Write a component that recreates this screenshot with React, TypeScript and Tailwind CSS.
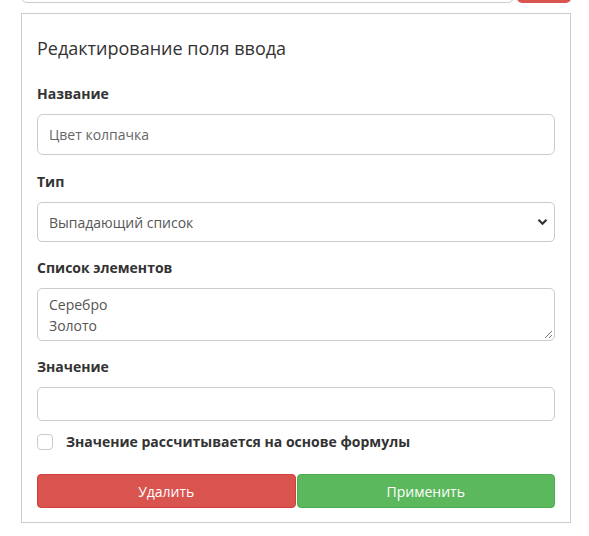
import React from "react";

export default function App() {
  const font = { fontFamily: '"Open Sans", "Noto Sans", sans-serif' };
  return (
    <div className="w-[589px] h-[536px] bg-white overflow-hidden text-[#333]" style={font}>
      {/* partial row above */}
      <div className="flex mt-[-31px] h-[34px] pl-[21px] gap-[3px]">
        <div className="w-[493px] h-[34px] border border-[#ccc] rounded-[6px] bg-white" />
        <div className="w-[54px] h-[34px] rounded-[5px] bg-[#d9534f]" />
      </div>
      <div className="ml-[21px] mt-[10px] w-[550px] border border-[#ccc] px-[15px] pt-[21px] pb-[14px]">
        <div className="text-[18px] leading-[26px] text-[#333]">Редактирование поля ввода</div>

        <div className="mt-[23px] text-[14px] font-bold leading-[20px]">Название</div>
        <div className="mt-[10px] h-[41px] border border-[#ccc] rounded-[6px] flex items-center px-[11px] text-[14px] text-[#666]">
          Цвет колпачка
        </div>

        <div className="mt-[17px] text-[14px] font-bold leading-[20px]">Тип</div>
        <div className="mt-[10px] h-[40px] border border-[#ccc] rounded-[5px] flex items-center justify-between pl-[11px] pr-[6px] text-[14px] text-[#555]">
          <span>Выпадающий список</span>
          <svg width="11" height="8" viewBox="0 0 11 8">
            <path d="M1.5 1.8 L5.5 5.8 L9.5 1.8" fill="none" stroke="#333" strokeWidth="2.2" />
          </svg>
        </div>

        <div className="mt-[16px] text-[14px] font-bold leading-[20px]">Список элементов</div>
        <div className="relative mt-[10px] h-[53px] border border-[#ccc] rounded-[5px] px-[11px] pt-[5px] text-[14px] leading-[21px] text-[#555]">
          <div>Серебро</div>
          <div>Золото</div>
          <svg className="absolute right-[1px] bottom-[1px]" width="10" height="10" viewBox="0 0 10 10">
            <path d="M9 2 L2 9 M9 6 L6 9" stroke="#777" strokeWidth="1" />
          </svg>
        </div>

        <div className="mt-[16px] text-[14px] font-bold leading-[20px]">Значение</div>
        <div className="mt-[10px] h-[34px] border border-[#ccc] rounded-[5px]" />

        <div className="mt-[13px] flex items-center h-[16px]">
          <div className="w-[16px] h-[16px] border border-[#ccc] rounded-[4px] bg-white" />
          <span className="ml-[13px] text-[14px] font-bold leading-[20px]">Значение рассчитывается на основе формулы</span>
        </div>

        <div className="mt-[24px] flex">
          <div className="flex-1 h-[34px] bg-[#d9534f] border border-[#d43f3a] rounded-[4px] flex items-center justify-center text-white text-[14px]">
            Удалить
          </div>
          <div className="flex-1 ml-[1px] h-[34px] bg-[#5cb85c] border border-[#4cae4c] rounded-[4px] flex items-center justify-center text-white text-[14px]">
            Применить
          </div>
        </div>
      </div>
    </div>
  );
}
